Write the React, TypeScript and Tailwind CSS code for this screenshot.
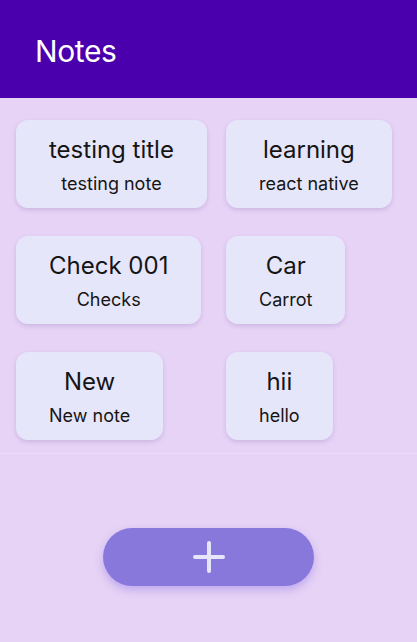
import React from "react";

interface Note {
  title: string;
  body: string;
}

const notes: Note[] = [
  { title: "testing title", body: "testing note" },
  { title: "learning", body: "react native" },
  { title: "Check 001", body: "Checks" },
  { title: "Car", body: "Carrot" },
  { title: "New", body: "New note" },
  { title: "hii", body: "hello" },
];

const NoteCard: React.FC<{ note: Note }> = ({ note }) => (
  <div className="justify-self-start h-[88px] px-[33px] pt-[2px] rounded-xl bg-[#E6E6FA] shadow-[0_2px_4px_rgba(120,80,170,0.22)] flex flex-col items-center justify-center text-[#151515]">
    <p className="text-[24px] leading-[30px] whitespace-nowrap">{note.title}</p>
    <p className="text-[18px] leading-[22px] mt-[8px] whitespace-nowrap">{note.body}</p>
  </div>
);

export default function App() {
  return (
    <div
      className="w-[417px] h-[642px] bg-[#E6D3F5] flex flex-col"
      style={{ fontFamily: "Inter, 'Open Sans', sans-serif" }}
    >
      <header className="h-[98px] bg-[#4B00AD] flex items-center px-[35px]">
        <h1 className="text-[30px] text-white font-normal tracking-[-0.4px] mt-[4px]">Notes</h1>
      </header>

      <div className="pt-[22px] pb-[13px] pl-4 border-b border-[#EBDCF8]">
        <div className="grid grid-cols-[210px_1fr] gap-y-[28px]">
          {notes.map((n) => (
            <NoteCard key={n.title} note={n} />
          ))}
        </div>
      </div>

      <div className="flex-1" />

      <div className="flex justify-center pb-[56px]">
        <button className="w-[211px] h-[58px] rounded-full bg-[#8878DC] shadow-[0_4px_8px_rgba(120,90,230,0.35)] flex items-center justify-center">
          <svg width="32" height="32" viewBox="0 0 32 32" fill="none">
            <path
              d="M16 2v28M2 16h28"
              stroke="#E6E6FA"
              strokeWidth="4"
              strokeLinecap="round"
            />
          </svg>
        </button>
      </div>
    </div>
  );
}
